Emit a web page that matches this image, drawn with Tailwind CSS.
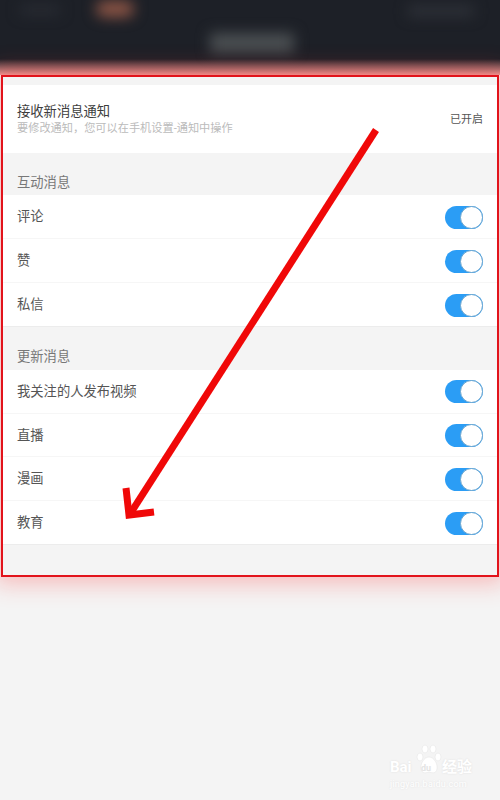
<!DOCTYPE html>
<html lang="zh">
<head>
	<meta charset="UTF-8">
	<title>消息设置</title>
	<script src="https://cdn.jsdelivr.net/npm/@tailwindcss/browser@4"></script>
</head>
<body>
	<div class="relative w-[500px] h-[800px] overflow-hidden bg-[#f4f4f4] font-['Roboto','Noto_Sans_CJK_SC',sans-serif]">
		<!-- blurred header -->
		<div class="relative h-[75px] bg-[#1d2027] overflow-hidden">
			<div class="absolute left-[96px] top-[1px] w-[38px] h-[16px] rounded-full bg-[#8f5646] blur-[7px]"></div>
			<div class="absolute left-[20px] top-[6px] w-[40px] h-[8px] bg-[#2b2e35] blur-[7px]"></div>
			<div class="absolute left-[408px] top-[6px] w-[66px] h-[10px] bg-[#30333a] blur-[7px]"></div>
			<div class="absolute left-[210px] top-[33px] w-[84px] h-[20px] bg-[#4b4f52] blur-[7px]"></div>
			<div class="absolute left-0 right-0 bottom-0 h-[16px] bg-gradient-to-b from-transparent to-[#ee9e9a]"></div>
		</div>

		<!-- highlighted region -->
		<div class="relative h-[502px] mx-px border-[2.5px] border-[#e2131b] bg-[#f4f4f4] pt-[8px] shadow-[0_0_22px_6px_rgba(255,50,50,0.3)]">
			<div class="flex items-center justify-between h-[68px] pl-[14px] pr-[14px] bg-white">
				<div class="pt-[1px]">
					<p class="text-[13.3px] leading-[18px] text-[#3d3d3d]">接收新消息通知</p>
					<p class="text-[11.2px] leading-[16px] text-[#bbb]">要修改通知，您可以在手机设置-通知中操作</p>
				</div>
				<span class="text-[11px] mt-[2px] text-[#555]">已开启</span>
			</div>

			<p class="h-[42px] pl-[14px] pt-[21px] text-[13.3px] leading-[18px] text-[#777]">互动消息</p>
			<div class="bg-white border-b border-[#ececec]">
				<div class="flex items-center justify-between h-[44px] pl-[14px] pr-[14px] pt-[1px] border-b border-[#f6f6f6]">
					<span class="text-[13.3px] text-[#555]">评论</span>
					<span class="flex justify-end w-[38px] h-[23px] rounded-full bg-[#2b9df5]"><span class="w-[23px] h-[23px] rounded-full bg-white border border-[#6aa5cf]"></span></span>
				</div>
				<div class="flex items-center justify-between h-[44px] pl-[14px] pr-[14px] pt-[1px] border-b border-[#f6f6f6]">
					<span class="text-[13.3px] text-[#555]">赞</span>
					<span class="flex justify-end w-[38px] h-[23px] rounded-full bg-[#2b9df5]"><span class="w-[23px] h-[23px] rounded-full bg-white border border-[#6aa5cf]"></span></span>
				</div>
				<div class="flex items-center justify-between h-[43px] pl-[14px] pr-[14px] pt-[1px]">
					<span class="text-[13.3px] text-[#555]">私信</span>
					<span class="flex justify-end w-[38px] h-[23px] rounded-full bg-[#2b9df5]"><span class="w-[23px] h-[23px] rounded-full bg-white border border-[#6aa5cf]"></span></span>
				</div>
			</div>

			<p class="h-[43px] pl-[14px] pt-[21px] text-[13.3px] leading-[18px] text-[#777]">更新消息</p>
			<div class="bg-white border-b border-[#ececec]">
				<div class="flex items-center justify-between h-[44px] pl-[14px] pr-[14px] border-b border-[#f6f6f6]">
					<span class="text-[13.3px] text-[#555]">我关注的人发布视频</span>
					<span class="flex justify-end w-[38px] h-[23px] rounded-full bg-[#2b9df5]"><span class="w-[23px] h-[23px] rounded-full bg-white border border-[#6aa5cf]"></span></span>
				</div>
				<div class="flex items-center justify-between h-[43px] pl-[14px] pr-[14px] pt-[1px] border-b border-[#f6f6f6]">
					<span class="text-[13.3px] text-[#555]">直播</span>
					<span class="flex justify-end w-[38px] h-[23px] rounded-full bg-[#2b9df5]"><span class="w-[23px] h-[23px] rounded-full bg-white border border-[#6aa5cf]"></span></span>
				</div>
				<div class="flex items-center justify-between h-[44px] pl-[14px] pr-[14px] pt-[1px] border-b border-[#f6f6f6]">
					<span class="text-[13.3px] text-[#555]">漫画</span>
					<span class="flex justify-end w-[38px] h-[23px] rounded-full bg-[#2b9df5]"><span class="w-[23px] h-[23px] rounded-full bg-white border border-[#6aa5cf]"></span></span>
				</div>
				<div class="flex items-center justify-between h-[43px] pl-[14px] pr-[14px] pt-[1px]">
					<span class="text-[13.3px] text-[#555]">教育</span>
					<span class="flex justify-end w-[38px] h-[23px] rounded-full bg-[#2b9df5]"><span class="w-[23px] h-[23px] rounded-full bg-white border border-[#6aa5cf]"></span></span>
				</div>
			</div>
		</div>

		<!-- red arrow annotation -->
		<svg class="absolute left-0 top-0" width="500" height="800" viewBox="0 0 500 800" fill="none">
			<path d="M376 130 L132 511" stroke="#f00808" stroke-width="7"/>
			<path d="M126 488 L129 515 L154 512" stroke="#f00808" stroke-width="7"/>
		</svg>

		<!-- watermark -->
		<div class="absolute left-[390px] top-[744px] w-[110px] h-[50px] text-white [text-shadow:0_0_2px_#ddd]">
			<svg class="absolute left-[26px] top-0" width="26" height="31" viewBox="0 0 26 31" fill="#fff" stroke="#e6e6e6" stroke-width="0.6">
				<ellipse cx="4" cy="13" rx="3" ry="4"/>
				<ellipse cx="9" cy="5" rx="3" ry="4"/>
				<ellipse cx="17" cy="5" rx="3" ry="4"/>
				<ellipse cx="22" cy="13" rx="3" ry="4"/>
				<path d="M13 13 C8 13 4 20 5 25 C6 30 10 29 13 28 C16 29 20 30 21 25 C22 20 18 13 13 13 Z"/>
			</svg>
			<span class="absolute left-0 top-[15px] text-[15px] leading-[16px] font-bold">Bai</span>
			<span class="absolute left-[31px] top-[19px] text-[9px] leading-[10px] font-bold text-[#e4e4e4] [text-shadow:none]">du</span>
			<span class="absolute left-[52px] top-[15px] text-[15px] leading-[17px] font-bold">经验</span>
			<span class="absolute left-0 top-[35px] text-[9px] leading-[10px] tracking-wide">jingyan.baidu.com</span>
		</div>
	</div>
</body>
</html>
